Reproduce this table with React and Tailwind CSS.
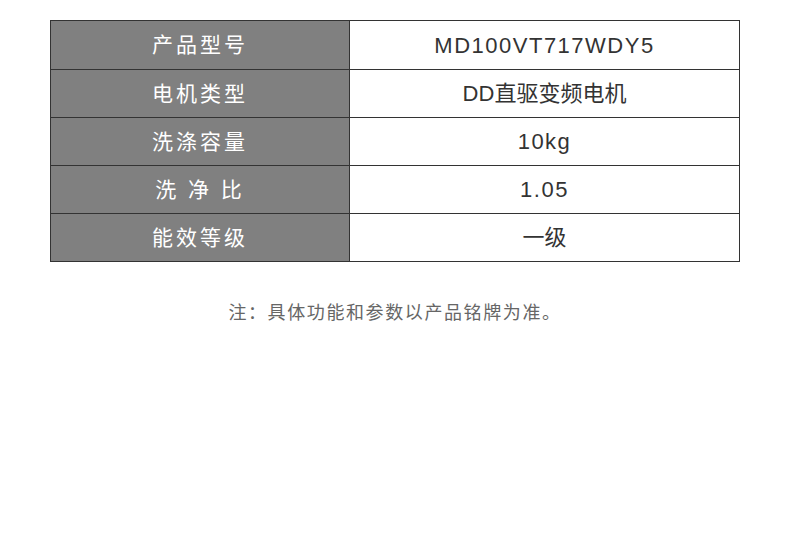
const rows = [
  ["产品型号", "MD100VT717WDY5", true],
  ["电机类型", "DD直驱变频电机", false],
  ["洗涤容量", "10kg", true],
  ["洗 净 比", "1.05", true],
  ["能效等级", "一级", false],
]

export default function App() {
  return (
    <div className="w-[790px] h-[533px] bg-white pt-[20px] font-['Liberation_Sans','Noto_Sans_CJK_SC',sans-serif]">
      <div className="mx-[50px] w-[690px] border border-[#333]">
        {rows.map(([k, v, latin], i) => (
          <div key={k} className={`flex h-[48px] ${i > 0 ? "border-t border-[#333]" : ""}`}>
            <div className="w-[299px] bg-[#808080] border-r border-[#333] flex items-center justify-center text-white text-[21px] tracking-[3px] whitespace-pre">
              {k}
            </div>
            <div className={`flex-1 flex items-center justify-center text-[#333] text-[22px] ${latin ? "tracking-[1.5px]" : ""}`}>
              {v}
            </div>
          </div>
        ))}
      </div>
      <p className="mt-[38px] text-center text-[#666] text-[18px] tracking-[1.6px]">
        注：具体功能和参数以产品铭牌为准。
      </p>
    </div>
  )
}
